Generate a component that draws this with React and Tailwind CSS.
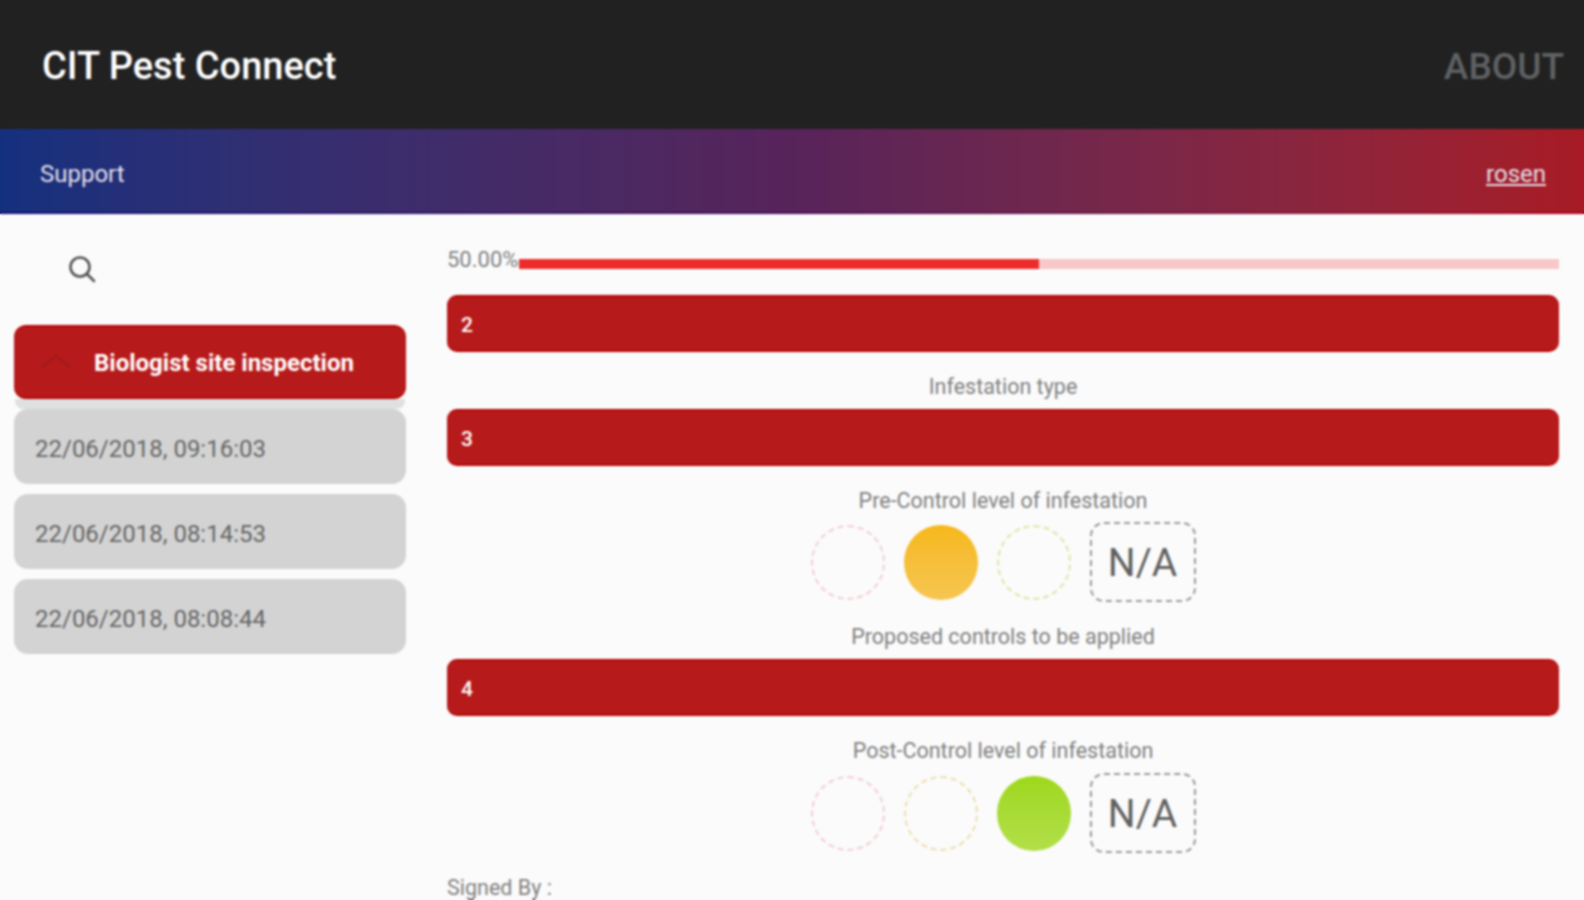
import React from 'react';

const Section = ({ n, className = '' }) => (
  <div className={`h-[57px] bg-[#b71a1a] border-y-2 border-[#b50707] rounded-[10px] flex items-center pl-[14px] pt-[4px] text-white text-[21px] font-medium ${className}`}>
    {n}
  </div>
);

const Label = ({ children, className = '' }) => (
  <p className={`text-center text-[21.5px] leading-[24px] text-[#808080] ${className}`}>{children}</p>
);

const Circle = ({ color, fill }) => (
  fill
    ? <div className={`w-[74px] h-[75px] rounded-full ${fill}`}></div>
    : <div className={`w-[74px] h-[75px] rounded-full border-2 border-dashed ${color}`}></div>
);

const Na = () => (
  <div className="w-[106px] h-[80px] rounded-[14px] border-2 border-dashed border-[#9a9a9a] flex items-center justify-center pt-[2px] text-[39px] text-[#606060]">
    N/A
  </div>
);

const Levels = ({ children }) => (
  <div className="flex items-center justify-center gap-[19px]">{children}</div>
);

const rows = ['22/06/2018, 09:16:03', '22/06/2018, 08:14:53', '22/06/2018, 08:08:44'];

export default function App() {
  return (
    <div className="relative w-[1584px] h-[900px] overflow-hidden bg-[#fbfbfb] font-['Roboto',sans-serif]">
      <header className="h-[129px] bg-[#212121] flex items-center justify-between pl-[42px] pr-[20px] pt-[4px]">
        <h1 className="text-[38px] font-medium text-white">CIT Pest Connect</h1>
        <span className="text-[37px] font-medium text-[#5f6163]">ABOUT</span>
      </header>
      <div className="h-[83px] bg-gradient-to-r from-[#14307e] via-[#57245a] to-[#a81b24] flex items-center justify-between pl-[40px] pr-[38px] pt-[6px] text-[24px] text-[#e6e0ea]">
        <span>Support</span>
        <span className="underline">rosen</span>
      </div>
      <div className="h-[2px] bg-gradient-to-r from-[#12107a] via-[#4a0f5a] to-[#b0001a]"></div>
      <div className="flex">
        <aside className="w-[447px] shrink-0 pl-[14px] pr-[41px]">
          <div className="h-[111px] pl-[53px] pt-[40px]">
            <svg width="30" height="30" viewBox="0 0 30 30" fill="none" stroke="#555555" strokeWidth="2.6" strokeLinecap="round">
              <circle cx="13" cy="13" r="9.5" />
              <path d="M20 20l7 7" />
            </svg>
          </div>
          <div className="h-[74px] bg-[#b71a1a] border-y-2 border-[#b50707] rounded-[12px] flex items-center text-white">
            <svg className="ml-[26px]" width="32" height="16" viewBox="0 0 32 16" fill="none" stroke="#9d1a1f" strokeWidth="2">
              <path d="M1 14L16 2l15 12" />
            </svg>
            <span className="ml-[22px] pt-[2px] text-[24px] font-bold">Biologist site inspection</span>
          </div>
          <div className="h-[10px] mx-px bg-[#dfe1e1] rounded-b-[8px]"></div>
          <div className="flex flex-col gap-[10px]">
            {rows.map(r => (
              <div key={r} className="h-[75px] bg-[#d3d3d3] rounded-[14px] flex items-center pl-[21px] pt-[4px] text-[24px] text-[#666666]">
                {r}
              </div>
            ))}
          </div>
        </aside>
        <main className="flex-1 pr-[25px]">
          <div className="h-[81px] pt-[33px] flex items-start">
            <span className="text-[22px] leading-[25px] text-[#808080] w-[72px] shrink-0">50.00%</span>
            <div className="flex-1 h-[10px] mt-[12px] bg-[#f8c8c8]">
              <div className="w-1/2 h-full bg-[#ee2b2b]"></div>
            </div>
          </div>
          <Section n="2" />
          <Label className="mt-[23px]">Infestation type</Label>
          <Section n="3" className="mt-[10px]" />
          <Label className="mt-[23px]">Pre-Control level of infestation</Label>
          <div className="mt-[9px]">
            <Levels>
              <Circle color="border-[#f2cfd2]" />
              <Circle fill="bg-gradient-to-b from-[#f6b818] to-[#f6c650]" />
              <Circle color="border-[#dde6a8]" />
              <Na />
            </Levels>
          </div>
          <Label className="mt-[23px]">Proposed controls to be applied</Label>
          <Section n="4" className="mt-[10px]" />
          <Label className="mt-[23px]">Post-Control level of infestation</Label>
          <div className="mt-[10px]">
            <Levels>
              <Circle color="border-[#f2cfd2]" />
              <Circle color="border-[#ecdfb0]" />
              <Circle fill="bg-gradient-to-b from-[#9ed81a] to-[#b2df48]" />
              <Na />
            </Levels>
          </div>
          <p className="mt-[22px] text-[21.5px] leading-[25px] text-[#808080]">Signed By :</p>
        </main>
      </div>
      {/* soft overlay, the source picture is an upscaled capture */}
      <div className="absolute inset-0 pointer-events-none backdrop-blur-[0.8px]"></div>
    </div>
  );
}
